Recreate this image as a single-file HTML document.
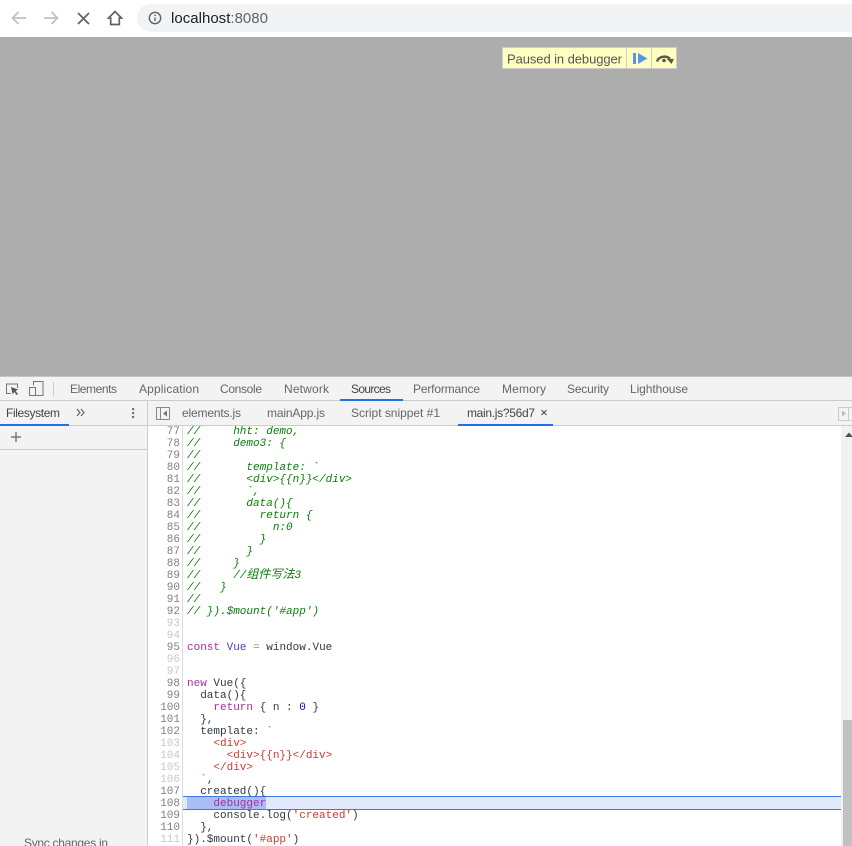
<!DOCTYPE html>
<html><head><meta charset="utf-8"><style>
html,body{margin:0;padding:0;background:#fff;overflow:hidden}
svg{display:block}
text{white-space:pre}
.u{font-family:"Liberation Sans","Noto Sans CJK SC",sans-serif;font-size:12px;fill:#666}
.d{fill:#444}
.c{font-family:"Liberation Mono","Noto Sans CJK SC",monospace;font-size:11px;fill:#303942}
.g{font-style:italic;fill:#0a7d0a}
.n{font-family:"Liberation Mono",monospace;font-size:11px;fill:#808080;text-anchor:end}
.m{fill:#c8c8c8}
.k{fill:#aa2d9b}.s{fill:#c93a36}.b{fill:#1c00cf}.v{fill:#4a45b5}.o{fill:#a67f59}
</style></head><body>
<svg width="852" height="846" viewBox="0 0 852 846" xmlns="http://www.w3.org/2000/svg">
<rect width="852" height="37" fill="#fff"/>
<rect y="37" width="852" height="339" fill="#adadad"/>
<rect x="137" y="4" width="730" height="28" rx="14" fill="#f1f3f4"/>
<g fill="none" stroke="#bdc1c6" stroke-width="1.7">
<path d="M26 18H12.5M18.5 12l-6 6 6 6"/>
<path d="M44 18h13.5M51.500 12l6 6-6 6"/>
</g>
<path d="M78 13l11 11M89 13L78 24" stroke="#5f6368" stroke-width="1.7" fill="none"/>
<path d="M115 11.500l-6.500 6.500h2.200v6.500h8.600v-6.500h2.200z" fill="none" stroke="#5f6368" stroke-width="1.7"/>
<circle cx="155" cy="18" r="5.700" fill="none" stroke="#5f6368" stroke-width="1.400"/>
<path d="M155 17.500v3.500M155 14.500v1.500" stroke="#5f6368" stroke-width="1.400"/>
<text x="171" y="23" font-family="Liberation Sans" font-size="15" textLength="97" lengthAdjust="spacing" fill="#202124">localhost<tspan fill="#5f6368">:8080</tspan></text>

<rect x="502.500" y="47.500" width="174" height="21" fill="#ffffc2" stroke="#ccc"/>
<path d="M626.500 48v20M651.500 48v20" stroke="#d0d0c0"/>
<text x="507" y="63.500" class="u" style="font-size:13px;fill:#555" textLength="115" lengthAdjust="spacing">Paused in debugger</text>
<rect x="633" y="53" width="3" height="11" fill="#5a94e8"/>
<path d="M638 53l9.500 5.500-9.500 5.500z" fill="#5a94e8"/>
<path d="M657 61.500a7.500 6.500 0 0 1 13-2.500" fill="none" stroke="#5a5a4a" stroke-width="2.400"/>
<path d="M667 59h7l-2.500 5z" fill="#5a5a4a"/>
<circle cx="664" cy="60.500" r="1.800" fill="#5a5a4a"/>

<rect y="376" width="852" height="470" fill="#f3f3f3"/>
<rect y="376" width="852" height="1" fill="#c4c4c4"/>
<rect y="400" width="852" height="1" fill="#ccc"/>
<rect x="53" y="382" width="1" height="14" fill="#ccc"/>
<path d="M11 393.500H6.500v-9.500h11v4" fill="none" stroke="#777" stroke-width="1"/>
<path d="M11 387l7 2.500-2.500 1.500 2.500 3-1.500 1-2-3-2 2z" fill="#555"/>
<path d="M33.500 385.500v-4h9.500v14h-9.500" fill="none" stroke="#777"/>
<rect x="29.500" y="387.500" width="6" height="8" fill="none" stroke="#777"/>
<g class="u">
<text x="70" y="393" textLength="47" lengthAdjust="spacing">Elements</text>
<text x="139" y="393" textLength="60" lengthAdjust="spacing">Application</text>
<text x="220" y="393" textLength="42" lengthAdjust="spacing">Console</text>
<text x="284" y="393" textLength="45" lengthAdjust="spacing">Network</text>
<text x="351" y="393" textLength="40" lengthAdjust="spacing" class="d">Sources</text>
<text x="413" y="393" textLength="67" lengthAdjust="spacing">Performance</text>
<text x="502" y="393" textLength="44" lengthAdjust="spacing">Memory</text>
<text x="567" y="393" textLength="42" lengthAdjust="spacing">Security</text>
<text x="630" y="393" textLength="58" lengthAdjust="spacing">Lighthouse</text>
<text x="6" y="417" textLength="54" lengthAdjust="spacing" class="d">Filesystem</text>
<text x="182" y="417" textLength="59" lengthAdjust="spacing">elements.js</text>
<text x="267" y="417" textLength="58" lengthAdjust="spacing">mainApp.js</text>
<text x="351" y="417" textLength="89" lengthAdjust="spacing">Script snippet #1</text>
<text x="467" y="417" textLength="68" lengthAdjust="spacing" class="d">main.js?56d7</text>
</g>
<rect x="340" y="399" width="63" height="2" fill="#1a73e8"/>
<rect y="425" width="852" height="1" fill="#ccc"/>
<rect x="0" y="424" width="69" height="2" fill="#1a73e8"/>
<rect x="458" y="424" width="95" height="2" fill="#1a73e8"/>
<path d="M77 409l3 3.500-3 3.500M81 409l3 3.500-3 3.500" fill="none" stroke="#666" stroke-width="1.200"/>
<g fill="#777"><rect x="132" y="408" width="2.200" height="2.200"/><rect x="132" y="412" width="2.200" height="2.200"/><rect x="132" y="416" width="2.200" height="2.200"/></g>
<rect x="147" y="401" width="1" height="445" fill="#ccc"/>
<rect x="156.500" y="407.500" width="13" height="12" fill="none" stroke="#888"/>
<rect x="160" y="408" width="1" height="11" fill="#888"/>
<path d="M167 410.500v6l-4-3z" fill="#777"/>
<path d="M544 410l5 5M549 410l-5 5" stroke="#555" stroke-width="1.200" transform="translate(-2.500 0)"/>
<rect x="838.500" y="407.500" width="14" height="13" fill="none" stroke="#ccc"/>
<rect x="848" y="408" width="1" height="12" fill="#ccc"/>
<path d="M842 410.500v6l4-3z" fill="#bbb"/>
<path d="M16 432v10M11 437h10" stroke="#777" stroke-width="1.400"/>
<rect y="449" width="147" height="1" fill="#ccc"/>
<text x="24" y="847" class="u" textLength="84" lengthAdjust="spacing">Sync changes in</text>

<rect x="148" y="426" width="704" height="420" fill="#fff"/>
<rect x="182" y="426" width="1" height="420" fill="#ddd"/>
<rect x="841" y="426" width="11" height="420" fill="#f1f1f1"/>
<path d="M849 432.500l4 4.500h-8z" fill="#505050"/>
<rect x="843" y="720" width="9" height="126" fill="#c1c1c1"/>
<rect x="183" y="796" width="658" height="14" fill="#e2e9fc"/>
<rect x="183" y="796" width="658" height="1" fill="#3b78e7"/>
<rect x="183" y="809" width="658" height="1" fill="#3b78e7"/>
<rect x="187" y="797" width="79" height="12" fill="#a9bdf7"/>

<g class="n" transform="translate(0 -1)">
<text x="180" y="435">77</text><text x="180" y="447">78</text><text x="180" y="459">79</text><text x="180" y="471">80</text>
<text x="180" y="483">81</text><text x="180" y="495">82</text><text x="180" y="507">83</text><text x="180" y="519">84</text>
<text x="180" y="531">85</text><text x="180" y="543">86</text><text x="180" y="555">87</text><text x="180" y="567">88</text>
<text x="180" y="579">89</text><text x="180" y="591">90</text><text x="180" y="603">91</text><text x="180" y="615">92</text>
<text x="180" y="627" class="m">93</text><text x="180" y="639" class="m">94</text><text x="180" y="651">95</text>
<text x="180" y="663" class="m">96</text><text x="180" y="675" class="m">97</text><text x="180" y="687">98</text>
<text x="180" y="699">99</text><text x="180" y="711">100</text><text x="180" y="723">101</text><text x="180" y="735">102</text>
<text x="180" y="747" class="m">103</text><text x="180" y="759" class="m">104</text><text x="180" y="771" class="m">105</text>
<text x="180" y="783" class="m">106</text><text x="180" y="795">107</text><text x="180" y="807">108</text>
<text x="180" y="819">109</text><text x="180" y="831">110</text><text x="180" y="843" class="m">111</text>
</g>
<g class="c" transform="translate(0 -1)">
<g class="g" style="font-family:'Liberation Mono','Noto Sans CJK SC',monospace">
<text x="187" y="435">//     hht: demo,</text>
<text x="187" y="447">//     demo3: {</text>
<text x="187" y="459">//</text>
<text x="187" y="471">//       template: `</text>
<text x="187" y="483">//       &lt;div&gt;{{n}}&lt;/div&gt;</text>
<text x="187" y="495">//       `,</text>
<text x="187" y="507">//       data(){</text>
<text x="187" y="519">//         return {</text>
<text x="187" y="531">//           n:0</text>
<text x="187" y="543">//         }</text>
<text x="187" y="555">//       }</text>
<text x="187" y="567">//     }</text>
<text x="187" y="579">//     //<tspan style="font-size:12px">组件写法</tspan>3</text>
<text x="187" y="591">//   }</text>
<text x="187" y="603">//</text>
<text x="187" y="615">// }).$mount('#app')</text>
</g>
<text x="187" y="651"><tspan class="k">const</tspan> <tspan class="v">Vue</tspan> <tspan class="o">=</tspan> window.Vue</text>
<text x="187" y="687"><tspan class="k">new</tspan> Vue({</text>
<text x="187" y="699">  data(){</text>
<text x="187" y="711">    <tspan class="k">return</tspan> { n : <tspan class="b">0</tspan> }</text>
<text x="187" y="723">  },</text>
<text x="187" y="735">  template: <tspan class="s">`</tspan></text>
<text x="187" y="747" class="s">    &lt;div&gt;</text>
<text x="187" y="759" class="s">      &lt;div&gt;{{n}}&lt;/div&gt;</text>
<text x="187" y="771" class="s">    &lt;/div&gt;</text>
<text x="187" y="783">  <tspan class="s">`</tspan>,</text>
<text x="187" y="795">  created(){</text>
<text x="187" y="807" class="k">    debugger</text>
<text x="187" y="819">    console.log(<tspan class="s">'created'</tspan>)</text>
<text x="187" y="831">  },</text>
<text x="187" y="843">}).$mount(<tspan class="s">'#app'</tspan>)</text>
</g>
</svg>
</body></html>
